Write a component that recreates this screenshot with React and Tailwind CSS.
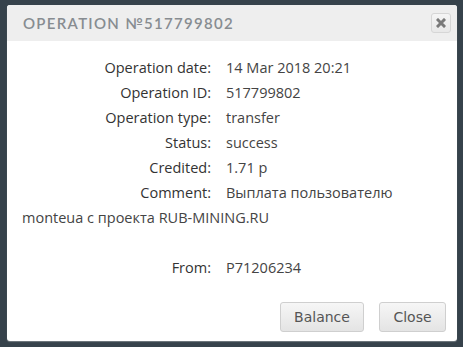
export default function App() {
  const rows = [
    ["Operation date:", "14 Mar 2018 20:21"],
    ["Operation ID:", "517799802"],
    ["Operation type:", "transfer"],
    ["Status:", "success"],
    ["Credited:", "1.71 р"],
  ];

  return (
    <div className="w-[463px] h-[347px] bg-[#36424b] pt-[5px] pl-[7px]">
      <div className="w-[450px] h-[336px] bg-white rounded-[3px] shadow-[0_1px_1px_rgba(255,255,255,0.3)] flex flex-col">
        <div className="h-[36px] bg-[#eeeeee] rounded-t-[3px] flex items-center justify-between pl-[16px] pr-[6px]">
          <h3 className="text-[15px] font-semibold tracking-[1.3px] text-[#878c91] font-['Lato',sans-serif]">
            OPERATION №517799802
          </h3>
          <button className="w-[20px] h-[20px] rounded-[3px] border border-[#d6d6d6] bg-gradient-to-b from-[#f5f5f5] to-[#e8e8e8] flex items-center justify-center">
            <svg width="10" height="10" viewBox="0 0 10 10">
              <path d="M2 2L8 8M8 2L2 8" stroke="#7a7a7a" strokeWidth="3" strokeLinecap="square" />
            </svg>
          </button>
        </div>

        <div className="px-[15px] pt-[14px] text-[14.5px] leading-[25px] text-[#444] font-['Open_Sans',sans-serif]">
          {rows.map(([label, value]) => (
            <div key={label}>
              <span className="inline-block w-[189px] text-right mr-[15px] text-[#333]">{label}</span>
              <span>{value}</span>
            </div>
          ))}
          <div>
            <span className="inline-block w-[189px] text-right mr-[15px] text-[#333]">Comment:</span>
            <span>Выплата пользователю monteua с проекта RUB-MINING.RU</span>
            <br />
            <br />
          </div>
          <div>
            <span className="inline-block w-[189px] text-right mr-[15px] text-[#333]">From:</span>
            <span>P71206234</span>
          </div>
        </div>

        <div className="mt-auto flex justify-end gap-[15px] pr-[11px] pb-[9px]">
          <button className="h-[30px] w-[84px] rounded-[3px] border border-[#cfcfcf] bg-gradient-to-b from-[#f6f6f6] to-[#e4e4e4] text-[14px] text-[#555] font-['DejaVu_Sans',sans-serif]">
            Balance
          </button>
          <button className="h-[30px] w-[67px] rounded-[3px] border border-[#cfcfcf] bg-gradient-to-b from-[#f6f6f6] to-[#e4e4e4] text-[14px] text-[#555] font-['DejaVu_Sans',sans-serif]">
            Close
          </button>
        </div>
      </div>
    </div>
  );
}
